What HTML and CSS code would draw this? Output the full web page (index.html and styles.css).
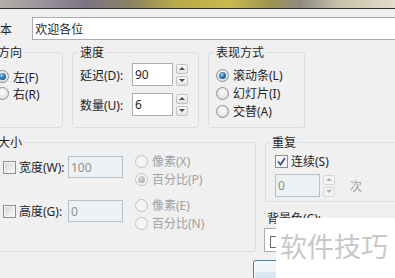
FILE: index.html
```html
<!DOCTYPE html>
<html lang="zh-CN">
<head>
  <meta charset="UTF-8" />
  <title>字幕设置</title>
  <link rel="stylesheet" href="styles.css">
</head>
<body>
  <div class="banner"></div>

  <div class="dialog">
    <div class="text-row">
      <span class="row-label">文本</span>
      <input class="textbox wide" type="text" value="欢迎各位">
    </div>

    <div class="groups-top">
      <div class="group g-dir">
        <div class="group-title">方向</div>
        <div class="opts">
          <div class="opt"><span class="radio checked"></span>左(F)</div>
          <div class="opt"><span class="radio"></span>右(R)</div>
        </div>
      </div>

      <div class="group g-speed">
        <div class="group-title">速度</div>
        <div class="fields">
          <div class="field">
            <span class="field-label">延迟(D):</span>
            <input class="textbox num" type="text" value="90">
            <div class="spin"><span class="up"></span><span class="down"></span></div>
          </div>
          <div class="field">
            <span class="field-label">数量(U):</span>
            <input class="textbox num" type="text" value="6">
            <div class="spin"><span class="up"></span><span class="down"></span></div>
          </div>
        </div>
      </div>

      <div class="group g-mode">
        <div class="group-title">表现方式</div>
        <div class="opts">
          <div class="opt"><span class="radio checked"></span>滚动条(L)</div>
          <div class="opt"><span class="radio"></span>幻灯片(I)</div>
          <div class="opt"><span class="radio"></span>交替(A)</div>
        </div>
      </div>
    </div>

    <div class="groups-bottom">
      <div class="group g-size">
        <div class="group-title">大小</div>
        <div class="size-rows">
          <div class="size-row">
            <div class="size-main">
              <span class="check"></span>
              <span class="size-label">宽度(W):</span>
              <input class="textbox off size-input" type="text" value="100" disabled>
            </div>
            <div class="unit-opts">
              <div class="opt off"><span class="radio"></span>像素(X)</div>
              <div class="opt off"><span class="radio checked"></span>百分比(P)</div>
            </div>
          </div>
          <div class="size-row">
            <div class="size-main">
              <span class="check"></span>
              <span class="size-label">高度(G):</span>
              <input class="textbox off size-input" type="text" value="0" disabled>
            </div>
            <div class="unit-opts">
              <div class="opt off"><span class="radio"></span>像素(E)</div>
              <div class="opt off"><span class="radio"></span>百分比(N)</div>
            </div>
          </div>
        </div>
      </div>

      <div class="side">
        <div class="group g-repeat">
          <div class="group-title">重复</div>
          <div class="repeat-body">
            <div class="repeat-check">
              <span class="check checked">
                <svg width="9" height="9" viewBox="0 0 9 9"><path d="M1 4.5 L3.5 7.5 L8 1" fill="none" stroke="#3b4f8a" stroke-width="1.8"/></svg>
              </span>
              连续(S)
            </div>
            <div class="repeat-count">
              <input class="textbox off count" type="text" value="0" disabled>
              <div class="spin off"><span class="up"></span><span class="down"></span></div>
              <span class="times">次</span>
            </div>
          </div>
        </div>
        <div class="bg-label">背景色(C):</div>
        <div class="combo"><span class="swatch"></span></div>
      </div>
    </div>

    <div class="buttons">
      <div class="btn"></div>
    </div>
  </div>

  <div class="watermark">软件技巧</div>
</body>
</html>
```

FILE: styles.css
```css
body {
  margin: 0;
  height: 278px;
  overflow: hidden;
  position: relative;
  background-color: #f0f0f0;
  color: #1f1f1f;
  font-family: "Noto Sans", "Noto Sans CJK SC", sans-serif;
  font-size: 12px;
}

.banner {
  height: 8px;
  border-bottom: 1px solid #2e2e2e;
  background: linear-gradient(90deg, #b4aea6 0%, #9c95a0 10%, #7b7384 22%, #8c8560 34%, #b8a94a 44%, #cbbb4c 58%, #9f9450 68%, #8f8b80 76%, #c9c1a8 86%, #e2dccb 100%);
}

.dialog {
  margin-left: -14px;
  width: 420px;
}

/* campos de texto */
.textbox {
  box-sizing: border-box;
  height: 23px;
  margin: 0;
  padding: 0 2px;
  border: 1px solid #abadb3;
  background-color: #fff;
  font: inherit;
  color: inherit;
  outline: none;
}

.textbox.off {
  border-color: #b4c0cc;
  background-color: #eef1f4;
  color: #8f8f8f;
}

.text-row {
  display: flex;
  align-items: center;
  padding-top: 8px;
}

.row-label {
  width: 45px;
  margin-left: 2px;
}

.wide {
  width: 380px;
}

/* caixas de grupo */
.group {
  box-sizing: border-box;
  border: 1px solid #d5dfe5;
  border-radius: 3px;
  flex: none;
}

.group-title {
  width: fit-content;
  margin: -7px 0 0 5px;
  padding: 0 2px;
  line-height: 14px;
  background-color: #f0f0f0;
}

.groups-top {
  display: flex;
  gap: 9px;
  margin-top: 12px;
}

.g-dir {
  margin-left: 4px;
  width: 73px;
  height: 76px;
}

.g-dir .opts {
  margin-top: 8px;
  padding-left: 5px;
}

.g-dir .opt {
  height: 17px;
}

.g-speed {
  width: 127px;
  height: 76px;
}

.g-mode {
  width: 97px;
  height: 76px;
}

.g-mode .opts {
  margin-top: 6px;
  padding-left: 7px;
}

.opt {
  display: flex;
  align-items: center;
  height: 18px;
  white-space: nowrap;
}

.opt.off {
  color: #a0a0a0;
}

/* radio e checkbox */
.radio {
  box-sizing: border-box;
  width: 13px;
  height: 13px;
  margin-right: 4px;
  border: 1px solid #8e8f8f;
  border-radius: 50%;
  background: radial-gradient(circle at 50% 40%, #fdfdfd 0, #ececec 45%, #cfcfcf 100%);
  display: flex;
  align-items: center;
  justify-content: center;
  flex: none;
}

.radio.checked::after {
  content: "";
  width: 7px;
  height: 7px;
  border-radius: 50%;
  background: radial-gradient(circle at 40% 35%, #9fd3f5 0, #2f78b8 45%, #173f6e 100%);
}

.off .radio {
  border-color: #c2c2c2;
  background: #f4f4f4;
}

.off .radio.checked::after {
  background: radial-gradient(circle at 40% 35%, #e0e0e0 0, #b4b4b4 60%, #9a9a9a 100%);
}

.check {
  box-sizing: border-box;
  width: 13px;
  height: 13px;
  margin-right: 3px;
  border: 1px solid #8e8f8f;
  background: linear-gradient(135deg, #cfd3d8, #fbfbfb);
  box-shadow: inset 0 0 0 1px #f6f6f6;
  display: flex;
  align-items: center;
  justify-content: center;
  flex: none;
}

.check.checked {
  background: #f6f6f6;
}

/* velocidade */
.fields {
  display: flex;
  flex-direction: column;
  gap: 7px;
  margin-top: 3px;
  padding-left: 7px;
}

.field {
  display: flex;
  align-items: center;
  height: 23px;
}

.field-label {
  width: 52px;
}

.num {
  width: 41px;
}

.spin {
  display: flex;
  flex-direction: column;
  gap: 2px;
  margin-left: 3px;
}

.spin span {
  box-sizing: border-box;
  width: 12px;
  height: 10px;
  border: 1px solid #c3c3c3;
  border-radius: 2px;
  background: linear-gradient(#fbfbfb, #e4e4e4);
  display: flex;
  align-items: center;
  justify-content: center;
}

.spin span::before {
  content: "";
  border-left: 3px solid transparent;
  border-right: 3px solid transparent;
}

.spin .up::before {
  border-bottom: 3px solid #4f4f4f;
}

.spin .down::before {
  border-top: 3px solid #4f4f4f;
}

.spin.off span {
  border-color: #d6d6d6;
  background: #f3f3f3;
}

.spin.off .up::before {
  border-bottom-color: #b0b0b0;
}

.spin.off .down::before {
  border-top-color: #b0b0b0;
}

/* tamanho */
.groups-bottom {
  display: flex;
  align-items: flex-start;
  gap: 9px;
  margin-top: 14px;
}

.g-size {
  margin-left: 4px;
  width: 266px;
  height: 110px;
}

.size-rows {
  margin-top: 2px;
}

.size-row {
  display: flex;
  padding-left: 12px;
}

.size-row + .size-row {
  margin-top: 8px;
}

.size-main {
  display: flex;
  align-items: center;
  height: 22px;
  margin-top: 4px;
}

.size-label {
  width: 49px;
}

.size-input {
  width: 55px;
  height: 22px;
}

.unit-opts {
  margin-left: 12px;
}

/* repetir */
.side {
  flex: 1;
}

.g-repeat {
  height: 60px;
}

.g-repeat .group-title {
  margin-left: 4px;
}

.repeat-body {
  padding-left: 9px;
}

.repeat-check {
  display: flex;
  align-items: center;
  height: 16px;
  margin-top: 3px;
}

.repeat-count {
  display: flex;
  align-items: center;
  height: 23px;
  margin-top: 5px;
}

.count {
  width: 45px;
}

.times {
  margin-left: 15px;
  color: #a0a0a0;
}

.bg-label {
  margin: 10px 0 0 2px;
  line-height: 14px;
}

.combo {
  box-sizing: border-box;
  height: 24px;
  margin: 2px 0 0 -1px;
  padding: 7px 0 0 5px;
  border: 1px solid #abadb3;
  background-color: #fff;
}

.swatch {
  display: block;
  box-sizing: border-box;
  width: 40px;
  height: 12px;
  border: 1px solid #666;
}

.buttons {
  margin-top: 8px;
  padding-left: 267px;
}

.btn {
  width: 75px;
  height: 23px;
  border: 1px solid #3c7fb1;
  border-radius: 3px;
  background: linear-gradient(#eef4f8 50%, #dde9f1 50%, #cfe0ec);
  box-shadow: inset 0 0 0 1px #fcfcfc;
}

.watermark {
  position: absolute;
  left: 276px;
  top: 218px;
  right: 0;
  bottom: 0;
  box-sizing: border-box;
  padding: 14px 0 0 4px;
  background-color: #fff;
  color: #c8c8c8;
  font-family: "Noto Sans CJK SC", sans-serif;
  font-size: 27px;
  line-height: 27px;
  white-space: nowrap;
}
```
